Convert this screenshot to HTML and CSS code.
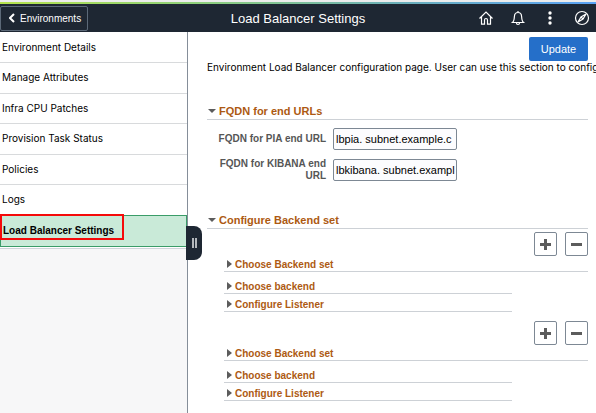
FILE: index.html
```
<!DOCTYPE html>
<html lang="en">
<head>
  <meta charset="UTF-8" />
  <meta name="viewport" content="width=device-width, initial-scale=1.0" />
  <title>Load Balancer Settings</title>
  <link rel="stylesheet" href="styles.css">
</head>
<body>
  <header class="topbar">
    <button type="button" class="back">
      <svg width="6" height="10" viewBox="0 0 6 10"><path d="M5 1 1 5l4 4" /></svg>
      Environments
    </button>
    <h1>Load Balancer Settings</h1>
    <div class="tools">
      <button type="button" aria-label="Home">
        <svg viewBox="0 0 16 16"><path d="M1.5 8.500 8 2l6.500 6.500M3.500 7v7.200h3V10c0-2 3-2 3 0v4.200h3V7" /></svg>
      </button>
      <button type="button" aria-label="Notifications">
        <svg viewBox="0 0 16 16"><path d="M2.500 12.500h11c-1.500-1.200-1.700-3-1.900-6C11.500 4 10 2.500 8 2.500S4.500 4 4.400 6.500c-.2 3-.4 4.800-1.900 6zM8 1v1.500M6.500 13c0 2 3 2 3 0" /></svg>
      </button>
      <button type="button" aria-label="Actions">
        <svg viewBox="0 0 16 16"><g class="dots"><circle cx="8" cy="3" r="1.700" /><circle cx="8" cy="8" r="1.700" /><circle cx="8" cy="13" r="1.700" /></g></svg>
      </button>
      <button type="button" aria-label="Navigator">
        <svg viewBox="0 0 16 16"><circle cx="8" cy="8" r="6.500" /><path d="M12 4 7 7l-3 5 5-3zM7 7l2 2" /></svg>
      </button>
    </div>
  </header>

  <div class="layout">
    <nav class="sidebar">
      <ul>
        <li><a href="#">Environment Details</a></li>
        <li><a href="#">Manage Attributes</a></li>
        <li><a href="#">Infra CPU Patches</a></li>
        <li><a href="#">Provision Task Status</a></li>
        <li><a href="#">Policies</a></li>
        <li><a href="#">Logs</a></li>
        <li class="selected"><a href="#">Load Balancer Settings</a></li>
      </ul>
      <button type="button" class="handle" aria-label="Collapse menu"></button>
    </nav>

    <main>
      <button type="button" class="update">Update</button>
      <p class="intro">Environment Load Balancer configuration page. User can use this section to config</p>

      <details class="section" open>
        <summary>FQDN for end URLs</summary>
        <div class="fields">
          <label for="pia">FQDN for PIA end URL</label>
          <input type="text" id="pia" value="lbpia. subnet.example.c" />
          <label for="kibana">FQDN for KIBANA end URL</label>
          <input type="text" id="kibana" value="lbkibana. subnet.exampl" />
        </div>
      </details>

      <details class="section" open>
        <summary>Configure Backend set</summary>
        <div class="group">
          <div class="actions">
            <button type="button" class="add" aria-label="Add backend set"></button>
            <button type="button" class="remove" aria-label="Remove backend set"></button>
          </div>
          <details class="wide"><summary>Choose Backend set</summary></details>
          <details><summary>Choose backend</summary></details>
          <details><summary>Configure Listener</summary></details>
        </div>
        <div class="group">
          <div class="actions">
            <button type="button" class="add" aria-label="Add backend set"></button>
            <button type="button" class="remove" aria-label="Remove backend set"></button>
          </div>
          <details class="wide"><summary>Choose Backend set</summary></details>
          <details><summary>Choose backend</summary></details>
          <details><summary>Configure Listener</summary></details>
        </div>
      </details>
    </main>
  </div>
</body>
</html>
```
FILE: styles.css
```
*, *::before, *::after {
  box-sizing: border-box;
}

body {
  margin: 0;
  min-height: 100vh;
  display: flex;
  flex-direction: column;
  background: #fff;
  color: #000;
  font-family: "Liberation Sans", Arial, sans-serif;
  font-size: 11px;
  overflow: hidden;
}

button {
  margin: 0;
  padding: 0;
  font: inherit;
  cursor: pointer;
}

/* top bar */
.topbar {
  display: grid;
  grid-template-columns: 1fr auto 1fr;
  align-items: center;
  height: 32px;
  padding-top: 4px;
  background:
    linear-gradient(#ececec, #ececec) 0 0 / 100% 2px no-repeat,
    linear-gradient(to right, #b5e34d, #8fd07c 33%, #6cb0b8 66%, #5aa2f5) 0 2px / 100% 2px no-repeat,
    #1e2733;
  color: #fff;
}

.topbar svg {
  fill: none;
  stroke: #fff;
  stroke-width: 1.2;
}

.back {
  justify-self: start;
  display: flex;
  align-items: center;
  gap: 5px;
  height: 25px;
  padding: 0 6px 0 8px;
  border: 1px solid #5c6978;
  border-radius: 2px;
  background: none;
  color: #fff;
  font-size: 10px;
}

.topbar .back svg {
  stroke-width: 2;
}

.topbar h1 {
  margin: 0;
  font-size: 13px;
  font-weight: normal;
}

.tools {
  display: flex;
  justify-content: flex-end;
  gap: 16px;
  padding-right: 6px;
}

.tools button {
  width: 16px;
  height: 16px;
  border: 0;
  background: none;
}

.tools svg {
  display: block;
}

.tools .dots {
  fill: #fff;
  stroke: none;
}

/* side menu */
.layout {
  flex: 1;
  display: flex;
}

.sidebar {
  position: relative;
  flex: 0 0 188px;
  border-right: 1px solid #858e99;
  background: #f7f7f8;
}

.sidebar ul {
  margin: 0;
  padding: 1px 0;
  border-bottom: 1px solid #cfd4da;
  background: #fff;
  list-style: none;
}

.sidebar a {
  display: flex;
  align-items: center;
  height: 30px;
  padding: 0 2px 2px;
  border-bottom: 1px solid #d8dadc;
  color: #000;
  font-family: Inter, Arial, sans-serif;
  font-size: 10px;
  text-decoration: none;
}

.sidebar li:nth-child(even) a {
  height: 31px;
}

.sidebar li:nth-child(6) a {
  height: 30px;
  border-bottom: 0;
}

.sidebar .selected {
  position: relative;
}

.sidebar .selected a {
  height: 32px;
  border: 1px solid #3a9c68;
  background: #c9ead8;
  font-family: inherit;
  font-weight: bold;
}

.selected::after {
  content: "";
  position: absolute;
  top: -1px;
  left: 0;
  width: 124px;
  height: 26px;
  border: 2px solid #f50a0a;
}

.handle {
  position: absolute;
  top: 194px;
  right: -15px;
  width: 16px;
  height: 34px;
  border: 0;
  border-radius: 0 8px 8px 0;
  background: #1e2733;
}

.handle::before {
  content: "";
  display: block;
  width: 5px;
  height: 10px;
  margin: 0 auto;
  border: solid #b4b8bc;
  border-width: 0 2px;
}

/* page content */
main {
  flex: 1;
  min-width: 0;
  padding: 5px 8px 10px 19px;
}

.update {
  display: block;
  width: 59px;
  height: 24px;
  margin-left: auto;
  border: 0;
  border-radius: 2px;
  background: #256fc9;
  color: #fff;
}

.intro {
  margin: 0 -8px 0 0;
  font-family: Inter, Arial, sans-serif;
  font-size: 10px;
  line-height: 12px;
  white-space: nowrap;
}

.section {
  margin-top: 30px;
}

summary {
  display: flex;
  align-items: center;
  border-bottom: 1px solid #cdd1d6;
  color: #ad5a12;
  font-size: 10px;
  font-weight: bold;
  cursor: pointer;
}

summary::before {
  content: "";
  border: 4px solid transparent;
  border-left: 5px solid #5c5c5c;
  border-right: 0;
  margin: 0 3px;
}

.section > summary {
  height: 17px;
  font-size: 11px;
}

.section > summary::before {
  border: 4px solid transparent;
  border-top: 4px solid #5c5c5c;
  border-bottom: 0;
  margin: 0 3px 0 1px;
}

.fields {
  display: grid;
  grid-template-columns: 119px 124px;
  align-items: center;
  gap: 8px 7px;
  padding-top: 8px;
}

.fields label {
  color: #565656;
  font-size: 10px;
  font-weight: bold;
  line-height: 12px;
  text-align: right;
}

.fields input {
  width: 100%;
  height: 22px;
  padding: 0 0 0 2px;
  border: 1px solid #7d8894;
  border-radius: 2px;
  background: #fcfcfe;
  color: #000;
  font: inherit;
}

.group {
  margin-left: 17px;
  padding-top: 3px;
}

.group + .group {
  padding-top: 9px;
}

.actions {
  display: flex;
  justify-content: flex-end;
  gap: 8px;
  margin-bottom: 1px;
}

.actions button {
  display: grid;
  place-items: center;
  width: 23px;
  height: 24px;
  border: 1px solid #7d8894;
  border-radius: 2px;
  background: #fff;
}

.actions button::before,
.add::after {
  content: "";
  grid-area: 1 / 1;
  width: 11px;
  height: 3px;
  background: #5c5c5c;
}

.actions .add::after {
  width: 3px;
  height: 11px;
}

.group details {
  width: 288px;
  max-width: 100%;
  margin-bottom: 3px;
}

.group details:last-child {
  margin-bottom: 0;
}

.group .wide {
  width: auto;
  margin-bottom: 7px;
}

.group summary {
  height: 15px;
}
```
